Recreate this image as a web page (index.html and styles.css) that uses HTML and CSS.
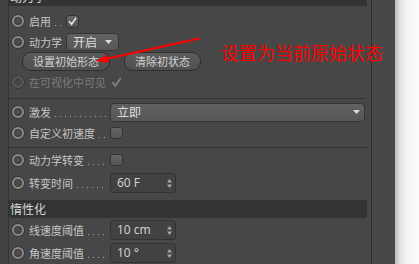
FILE: index.html
```html
<!DOCTYPE html>
<html lang="zh-CN">
<head>
<meta charset="utf-8">
<title>动力学</title>
<link rel="stylesheet" href="styles.css">
</head>
<body>
<div class="page">
  <div class="strip"></div>
  <div class="main">
    <div class="hdr hdr-top">动力学</div>

    <div class="sec sec1">
      <div class="row r1">
        <span class="radio"></span>
        <span class="label short"><span class="txt">启用</span><span class="dots"></span></span>
        <span class="check"><svg width="13" height="13" viewBox="0 0 13 13"><path d="M3 6.8 L5.4 9.8 L10.2 2.8" fill="none" stroke="#e6e6e6" stroke-width="2" stroke-linecap="round" stroke-linejoin="round"/></svg></span>
      </div>
      <div class="row r2">
        <span class="radio"></span>
        <span class="label short"><span class="txt">动力学</span></span>
        <span class="select small"><span class="stxt">开启</span><svg class="arrow" width="7" height="4" viewBox="0 0 7 4"><path d="M0 0 H7 L3.5 4 Z" fill="#dcdcdc"/></svg></span>
      </div>
      <div class="btnrow">
        <span class="btn b1">设置初始形态</span>
        <span class="btn b2">清除初状态</span>
      </div>
      <div class="row r4 dim">
        <span class="radio"></span>
        <span class="label long"><span class="txt">在可视化中可见</span></span>
        <span class="check flat"><svg width="13" height="13" viewBox="0 0 13 13"><path d="M3 6.8 L5.4 9.8 L10.2 2.8" fill="none" stroke="#7c7c7c" stroke-width="2" stroke-linecap="round" stroke-linejoin="round"/></svg></span>
      </div>
    </div>

    <div class="sep s1"></div>

    <div class="row r5">
      <span class="radio"></span>
      <span class="label long"><span class="txt">激发</span><span class="dots"></span></span>
      <span class="select wide"><span class="stxt">立即</span><svg class="arrow" width="7" height="4" viewBox="0 0 7 4"><path d="M0 0 H7 L3.5 4 Z" fill="#dcdcdc"/></svg></span>
    </div>
    <div class="row r6">
      <span class="radio"></span>
      <span class="label long"><span class="txt">自定义初速度</span><span class="dots"></span></span>
      <span class="check"></span>
    </div>

    <div class="sep s2"></div>

    <div class="row r7">
      <span class="radio"></span>
      <span class="label long"><span class="txt">动力学转变</span><span class="dots"></span></span>
      <span class="check"></span>
    </div>
    <div class="row r8 tall">
      <span class="radio"></span>
      <span class="label long"><span class="txt">转变时间</span><span class="dots"></span></span>
      <span class="input"><span class="itxt">60 F</span><svg class="spin" width="5" height="9" viewBox="0 0 5 9"><path d="M0 3.5 L2.5 0 L5 3.5 Z M0 5.5 H5 L2.5 9 Z" fill="#a8a8a8"/></svg></span>
    </div>

    <div class="hdr hdr-2">惰性化</div>

    <div class="row r9 tall">
      <span class="radio"></span>
      <span class="label long"><span class="txt">线速度阈值</span><span class="dots"></span></span>
      <span class="input"><span class="itxt">10 cm</span><svg class="spin" width="5" height="9" viewBox="0 0 5 9"><path d="M0 3.5 L2.5 0 L5 3.5 Z M0 5.5 H5 L2.5 9 Z" fill="#a8a8a8"/></svg></span>
    </div>
    <div class="row r10 tall">
      <span class="radio"></span>
      <span class="label long"><span class="txt">角速度阈值</span><span class="dots"></span></span>
      <span class="input"><span class="itxt">10 °</span><svg class="spin" width="5" height="9" viewBox="0 0 5 9"><path d="M0 3.5 L2.5 0 L5 3.5 Z M0 5.5 H5 L2.5 9 Z" fill="#a8a8a8"/></svg></span>
    </div>
  </div>
  <div class="vline"></div>
  <div class="side"></div>
  <div class="shade"></div>

  <svg class="anno" width="419" height="264" viewBox="0 0 419 264">
    <line x1="199" y1="38.5" x2="107" y2="58.7" stroke="#ff0000" stroke-width="2.2" stroke-linecap="round"/>
    <polygon points="96,61.2 108.8,62.8 106.9,54.6" fill="#ff0000"/>
  </svg>
  <div class="note">设置为当前原始状态</div>
</div>
</body>
</html>
```

FILE: styles.css
```css
* { box-sizing: border-box; }
html, body { margin: 0; padding: 0; }
body {
  width: 419px;
  height: 264px;
  overflow: hidden;
  background: #474747;
  font-family: "Noto Sans CJK SC", "Noto Sans", "Liberation Sans", sans-serif;
  font-size: 11px;
  color: #c6c6c6;
}
.page {
  position: relative;
  display: flex;
  width: 419px;
  height: 264px;
  overflow: hidden;
}
.strip {
  width: 9px;
  flex: none;
  background: #434343;
  border-right: 1px solid #343434;
}
.main {
  width: 362px;
  flex: none;
  display: flex;
  flex-direction: column;
  padding-right: 4px;
  background: #474747;
}
.vline { width: 1px; flex: none; background: #2f2f2f; }
.side { width: 23px; flex: none; background: #474747; }
.shade {
  flex: 1;
  background: linear-gradient(to right, #b9b9b9 0, #e2e2e2 5px, #f3f3f3 12px, #fbfbfb 24px);
}

.hdr {
  height: 18px;
  flex: none;
  background: #333333;
  color: #d6d6d6;
  line-height: 18px;
  padding-left: 1px;
  font-size: 12px;
}
.hdr-top { margin-top: -12px; }
.hdr-2 { margin-top: 7px; }

.sec1 { padding-top: 5px; display: flex; flex-direction: column; }

.row {
  height: 20px;
  flex: none;
  display: flex;
  align-items: center;
  padding-left: 3px;
}
.r2 { margin-top: 1px; }
.r4 { margin-top: 1px; }
.r5 { margin-top: 3px; }
.r6 { margin-top: 1px; }
.r7 { margin-top: 2px; }
.r8 { margin-top: 3px; }
.r9 { margin-top: 2px; }
.r10 { margin-top: 3px; }

.sep { height: 1px; flex: none; background: #333333; }
.s1 { margin-top: 6px; }
.s2 { margin-top: 4px; }

.radio {
  width: 12px;
  height: 12px;
  flex: none;
  border-radius: 50%;
  border: 2px solid #8a8a8a;
  background: radial-gradient(circle at 50% 45%, #525252 0, #3e3e3e 70%, #2e2e2e 100%);
  box-shadow: 0 0 0 1px #383838;
}
.dim .radio {
  border-color: #5a5a5a;
  background: #444;
}
.dim { color: #7c7c7c; }

.label {
  display: flex;
  align-items: center;
  height: 100%;
  margin-left: 5px;
  flex: none;
}
.label.short { width: 37px; }
.label.long { width: 81px; }
.txt { white-space: nowrap; line-height: 20px; }
.dots {
  flex: 1;
  align-self: stretch;
  margin: 0 3px 0 3px;
  background-image: linear-gradient(to right, #a2a2a2 1px, transparent 1px);
  background-size: 5px 1px;
  background-repeat: repeat-x;
  background-position: 1px 14px;
}

.check {
  width: 13px;
  height: 12px;
  flex: none;
  display: flex;
  align-items: center;
  justify-content: center;
  border-radius: 3px;
  border: 1px solid #333;
  background: linear-gradient(#666, #545454);
}
.r1 .check { width: 13px; height: 13px; margin-top: 1px; }
.check.flat { border: none; background: none; }

.select {
  height: 18px;
  display: flex;
  align-items: center;
  justify-content: space-between;
  border: 1px solid #353535;
  border-radius: 4px;
  background: linear-gradient(#616161, #575757);
  color: #dedede;
  padding: 0 6px 0 6px;
  font-size: 12px;
}
.select.small { width: 53px; }
.select.wide { width: 255px; height: 19px; padding-right: 4px; }
.stxt { line-height: 16px; }
.arrow { flex: none; }

.btnrow {
  height: 19px;
  flex: none;
  display: flex;
  padding-left: 13px;
  gap: 14px;
}
.btn {
  height: 19px;
  display: flex;
  align-items: center;
  justify-content: center;
  border-radius: 9px;
  border: 1px solid #2f2f2f;
  background: linear-gradient(#5c5c5c, #4f4f4f);
  color: #d2d2d2;
  line-height: 17px;
}
.b1 { width: 88px; }
.b2 { width: 77px; }

.input {
  width: 66px;
  height: 20px;
  display: flex;
  align-items: center;
  justify-content: space-between;
  border: 1px solid #333;
  border-radius: 3px;
  background: #424242;
  color: #d0d0d0;
  padding: 0 3px 0 6px;
  font-family: "Noto Sans", "Liberation Sans", sans-serif;
  font-size: 12px;
}
.itxt { line-height: 18px; }
.spin { flex: none; }

.anno { position: absolute; left: 0; top: 0; pointer-events: none; }
.note {
  position: absolute;
  left: 221px;
  top: 42px;
  font-size: 18px;
  line-height: 20px;
  color: #ff0000;
  white-space: nowrap;
}
```
